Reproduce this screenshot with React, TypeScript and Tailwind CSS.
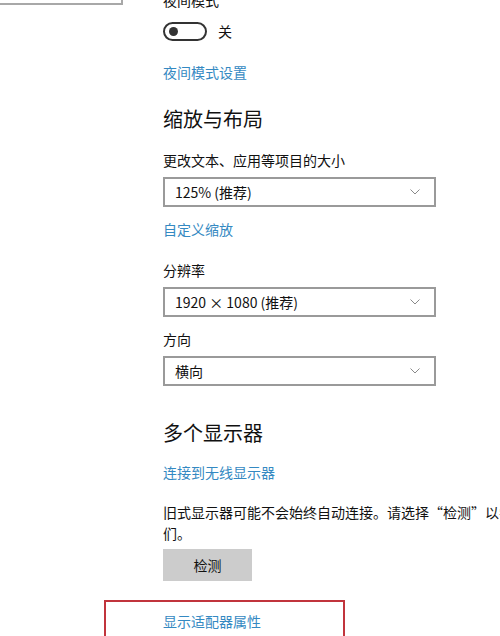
import React from "react";

const font = { fontFamily: '"Noto Sans CJK SC", "Noto Sans", sans-serif' };

function Select({ value }: { value: string }) {
  return (
    <div className="flex h-[30px] w-[273px] items-center justify-between border-2 border-[#9a9a9a] bg-white pl-[10px] pr-[14px]">
      <span className="text-[14px] leading-[20px] text-[#111]">{value}</span>
      <svg width="10" height="6" viewBox="0 0 10 6" fill="none">
        <path d="M0.5 0.5 L5 5 L9.5 0.5" stroke="#8a8a8a" strokeWidth="1" />
      </svg>
    </div>
  );
}

export default function App() {
  return (
    <div
      className="h-[636px] w-[500px] overflow-hidden bg-white text-[#111]"
      style={font}
    >
      <div className="flex">
        <div className="w-[163px] shrink-0">
          <div className="ml-[-2px] mt-[-26px] h-[31px] w-[125px] border-2 border-[#a8a8a8] bg-white" />
        </div>
        <div className="flex min-w-0 flex-col">
          <div className="mt-[-10px] h-[20px] text-[14px] leading-[20px]">夜间模式</div>

          <div className="mt-[11px] flex h-[20px] items-center gap-[11px]">
            <div className="flex h-[19px] w-[44px] items-center rounded-full border-2 border-[#333] pl-[4px]">
              <div className="h-[9px] w-[9px] rounded-full bg-[#333]" />
            </div>
            <span className="text-[14px] leading-[20px]">关</span>
          </div>

          <div className="mt-[21px] h-[20px] text-[14px] leading-[20px] text-[#3489c2]">
            夜间模式设置
          </div>

          <div className="mt-[23px] h-[28px] text-[20px] leading-[28px]">缩放与布局</div>

          <div className="mt-[17px] h-[20px] text-[14px] leading-[20px]">
            更改文本、应用等项目的大小
          </div>
          <div className="mt-[7px]">
            <Select value="125% (推荐)" />
          </div>

          <div className="mt-[12px] h-[20px] text-[14px] leading-[20px] text-[#3489c2]">
            自定义缩放
          </div>

          <div className="mt-[21px] h-[20px] text-[14px] leading-[20px]">分辨率</div>
          <div className="mt-[7px]">
            <Select value="1920 × 1080 (推荐)" />
          </div>

          <div className="mt-[12px] h-[20px] text-[14px] leading-[20px]">方向</div>
          <div className="mt-[7px]">
            <Select value="横向" />
          </div>

          <div className="mt-[33px] h-[28px] text-[20px] leading-[28px]">多个显示器</div>

          <div className="mt-[15px] h-[20px] text-[14px] leading-[20px] text-[#3489c2]">
            连接到无线显示器
          </div>

          <div className="mt-[20px] whitespace-nowrap text-[14px] leading-[21px]">
            旧式显示器可能不会始终自动连接。请选择“检测”以尝试连接到它
            <br />
            们。
          </div>

          <div className="mt-[5px] flex h-[32px] w-[89px] items-center justify-center bg-[#cccccc] text-[14px] leading-[20px]">
            检测
          </div>

          <div className="ml-[-59px] mt-[19px] h-[60px] w-[241px] border-2 border-[#c1343c] pl-[57px] pt-[6px]">
            <span className="text-[14px] leading-[20px] text-[#3489c2]">显示适配器属性</span>
          </div>
        </div>
      </div>
    </div>
  );
}
